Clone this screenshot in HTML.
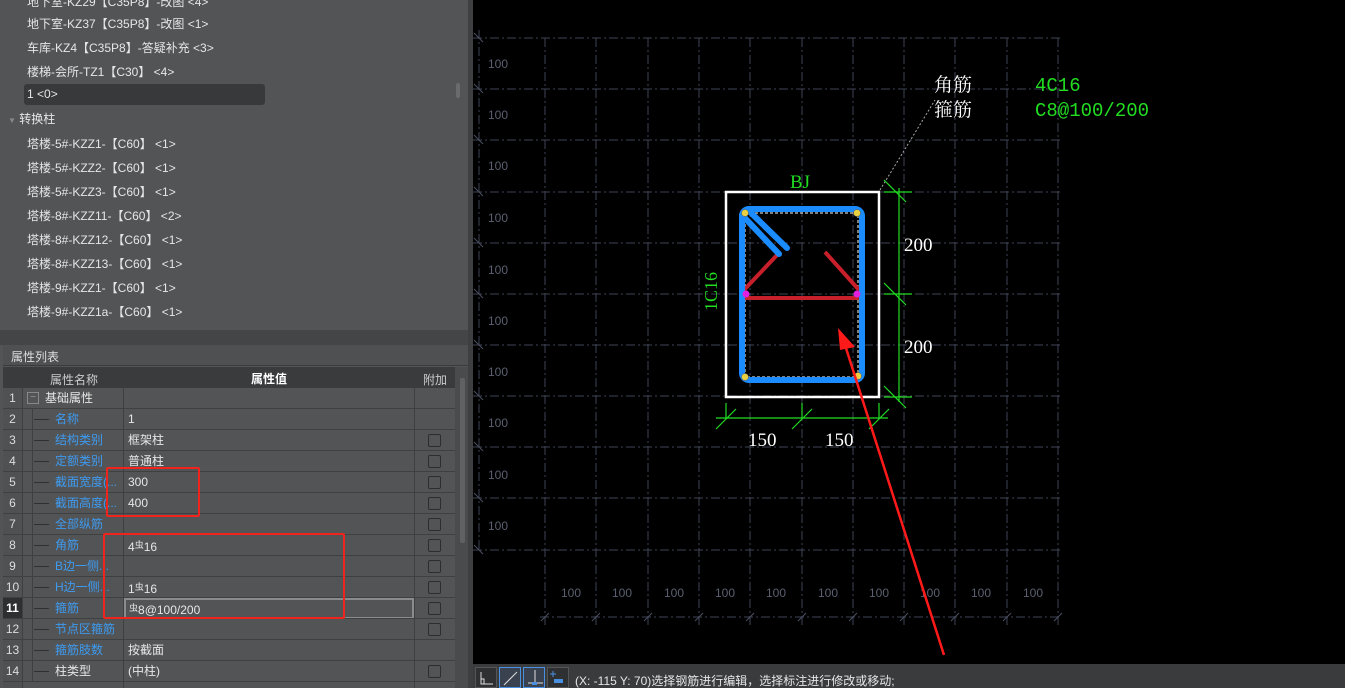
<!DOCTYPE html>
<html style="overflow:hidden;width:1345px;height:688px"><head><meta charset="utf-8"><style>
*{margin:0;padding:0;box-sizing:border-box}
body{width:1345px;height:688px;overflow:hidden;background:#000;font-family:"Liberation Sans","Noto Sans CJK SC",sans-serif;font-size:12px;position:relative}
.lp{position:absolute;left:0;top:0;width:468px;height:688px;background:#535456}
.sep{position:absolute;left:468px;top:0;width:5px;height:688px;background:#3e3f41}
.tree div{position:absolute;left:27px;color:#e6e6e6;font-size:12px;white-space:nowrap}
.t{position:absolute;color:#e6e6e6;font-size:12px;white-space:nowrap}
.row{position:absolute;left:3px;width:452px;height:21px;border-bottom:1px solid #3f4042;overflow:hidden}
.row .n{position:absolute;left:0;width:20px;top:0;height:21px;text-align:center;line-height:21px;color:#ddd;background:#505153;border-right:1px solid #3f4042}
.row .k{position:absolute;left:52px;line-height:21px;color:#3d9bf0}
.row .ln{position:absolute;left:31px;top:10px;width:15px;border-top:1px solid #2f3032}
.row .vl{position:absolute;left:29px;top:0;height:21px;border-left:1px solid #3f4042}
.row .v{position:absolute;left:125px;line-height:21px;color:#e6e6e6}
.row .c1{position:absolute;left:120px;top:0;height:21px;border-left:1px solid #3f4042}
.row .c2{position:absolute;left:411px;top:0;height:21px;border-left:1px solid #3f4042}
.row .cb{position:absolute;left:425px;top:4px;width:13px;height:13px;border:1px solid #2c2d2f;border-radius:2px}
.g{font-size:9px;vertical-align:3px}
</style></head><body>
<div class="lp"></div>
<div class="tree">
<div style="top:-7px">地下室-KZ29【C35P8】-改图 &lt;4&gt;</div>
<div style="top:15px">地下室-KZ37【C35P8】-改图 &lt;1&gt;</div>
<div style="top:39px">车库-KZ4【C35P8】-答疑补充 &lt;3&gt;</div>
<div style="top:63px">楼梯-会所-TZ1【C30】 &lt;4&gt;</div>
<div style="top:84px;left:24px;width:241px;height:21px;background:#38393b;border-radius:3px;padding:3px 0 0 3px">1 &lt;0&gt;</div>
<div style="top:110px;left:8px"><span style="color:#888;font-size:8px">▼</span> 转换柱</div>
<div style="top:135px">塔楼-5#-KZZ1-【C60】 &lt;1&gt;</div>
<div style="top:159px">塔楼-5#-KZZ2-【C60】 &lt;1&gt;</div>
<div style="top:183px">塔楼-5#-KZZ3-【C60】 &lt;1&gt;</div>
<div style="top:207px">塔楼-8#-KZZ11-【C60】 &lt;2&gt;</div>
<div style="top:231px">塔楼-8#-KZZ12-【C60】 &lt;1&gt;</div>
<div style="top:255px">塔楼-8#-KZZ13-【C60】 &lt;1&gt;</div>
<div style="top:279px">塔楼-9#-KZZ1-【C60】 &lt;1&gt;</div>
<div style="top:303px">塔楼-9#-KZZ1a-【C60】 &lt;1&gt;</div>
</div>
<div style="position:absolute;left:456px;top:83px;width:4px;height:15px;background:#6a6b6d;border-radius:2px"></div>
<div style="position:absolute;left:0;top:330px;width:468px;height:15px;background:#444547"></div>
<div style="position:absolute;left:3px;top:345px;width:465px;height:21px;background:#4f5052;border-bottom:1px solid #3a3b3d"></div>
<div class="t" style="left:11px;top:348px;color:#ddd">属性列表</div>
<div style="position:absolute;left:3px;top:367px;width:452px;height:21px;background:#3a3b3d"></div>
<div class="t" style="left:50px;top:371px;color:#ccc">属性名称</div>
<div class="t" style="left:251px;top:370px;color:#fff;font-weight:bold">属性值</div>
<div class="t" style="left:423px;top:371px;color:#ccc">附加</div>
<div style="position:absolute;left:455px;top:367px;width:13px;height:321px;background:#4a4b4d"></div>
<div style="position:absolute;left:460px;top:378px;width:5px;height:165px;background:#606163;border-radius:2px"></div>

<div class="row" style="top:388px"><div class="n">1</div><div class="c1"></div><div class="c2"></div><div style="position:absolute;left:24px;top:4px;width:12px;height:12px;border:1px solid #888;color:#999;font-size:10px;line-height:9px;text-align:center">−</div><span class="v" style="left:42px">基础属性</span></div>
<div class="row" style="top:409px"><div class="n">2</div><div class="vl"></div><div class="ln"></div><div class="c1"></div><div class="c2"></div><span class="k">名称</span><span class="v">1</span></div>
<div class="row" style="top:430px"><div class="n">3</div><div class="vl"></div><div class="ln"></div><div class="c1"></div><div class="c2"></div><span class="k">结构类别</span><span class="v">框架柱</span><div class="cb"></div></div>
<div class="row" style="top:451px"><div class="n">4</div><div class="vl"></div><div class="ln"></div><div class="c1"></div><div class="c2"></div><span class="k">定额类别</span><span class="v">普通柱</span><div class="cb"></div></div>
<div class="row" style="top:472px"><div class="n">5</div><div class="vl"></div><div class="ln"></div><div class="c1"></div><div class="c2"></div><span class="k">截面宽度(...</span><span class="v">300</span><div class="cb"></div></div>
<div class="row" style="top:493px"><div class="n">6</div><div class="vl"></div><div class="ln"></div><div class="c1"></div><div class="c2"></div><span class="k">截面高度(...</span><span class="v">400</span><div class="cb"></div></div>
<div class="row" style="top:514px"><div class="n">7</div><div class="vl"></div><div class="ln"></div><div class="c1"></div><div class="c2"></div><span class="k">全部纵筋</span><div class="cb"></div></div>
<div class="row" style="top:535px"><div class="n">8</div><div class="vl"></div><div class="ln"></div><div class="c1"></div><div class="c2"></div><span class="k">角筋</span><span class="v">4<span class="g">虫</span>16</span><div class="cb"></div></div>
<div class="row" style="top:556px"><div class="n">9</div><div class="vl"></div><div class="ln"></div><div class="c1"></div><div class="c2"></div><span class="k">B边一侧...</span><div class="cb"></div></div>
<div class="row" style="top:577px"><div class="n">10</div><div class="vl"></div><div class="ln"></div><div class="c1"></div><div class="c2"></div><span class="k">H边一侧...</span><span class="v">1<span class="g">虫</span>16</span><div class="cb"></div></div>
<div class="row" style="top:598px"><div class="n" style="color:#fff;font-weight:bold;background:#2e2f31">11</div><div class="vl"></div><div class="ln"></div><div class="c1"></div><div class="c2"></div><span class="k">箍筋</span><div style="position:absolute;left:121px;top:0;width:290px;height:21px;border:2px solid #8a8b8d"></div><span class="v" style="left:126px"><span class="g">虫</span>8@100/200</span><div class="cb"></div></div>
<div class="row" style="top:619px"><div class="n">12</div><div class="vl"></div><div class="ln"></div><div class="c1"></div><div class="c2"></div><span class="k">节点区箍筋</span><div class="cb"></div></div>
<div class="row" style="top:640px"><div class="n">13</div><div class="vl"></div><div class="ln"></div><div class="c1"></div><div class="c2"></div><span class="k">箍筋肢数</span><span class="v">按截面</span></div>
<div class="row" style="top:661px"><div class="n">14</div><div class="vl"></div><div class="ln"></div><div class="c1"></div><div class="c2"></div><span class="k" style="color:#e6e6e6">柱类型</span><span class="v">(中柱)</span><div class="cb"></div></div>
<div class="row" style="top:682px;height:6px;border:0"><div class="n" style="height:6px"></div><div class="c1"></div><div class="c2"></div></div>

<div style="position:absolute;left:106px;top:467px;width:94px;height:50px;border:2px solid #f0241c;border-radius:2px"></div>
<div style="position:absolute;left:103px;top:533px;width:242px;height:86px;border:2px solid #f0241c;border-radius:2px"></div>

<div class="sep"></div>

<svg style="position:absolute;left:0;top:0" width="1345" height="688">
<g stroke="#3f4556" stroke-width="1" stroke-dasharray="9,3,2,3" fill="none">
<path d="M473 38H1060M473 89H1060M473 140H1060M473 192H1060M473 243H1060M473 294H1060M473 345H1060M473 396H1060M473 447H1060M473 498H1060M473 550H1060"/>
<path d="M479 30V550M545 38V625M596 38V625M648 38V625M699 38V625M750 38V625M802 38V625M853 38V625M904 38V625M955 38V625M1007 38V625M1058 38V625"/>
<path d="M540 617H1062"/>
</g>
<g stroke="#4a5060" stroke-width="1">
<path d="M474 33l9 9M474 84l9 9M474 135l9 9M474 187l9 9M474 238l9 9M474 289l9 9M474 340l9 9M474 391l9 9M474 442l9 9M474 493l9 9M474 545l9 9"/>
<path d="M541 621l8-8M592 621l8-8M644 621l8-8M695 621l8-8M746 621l8-8M798 621l8-8M849 621l8-8M900 621l8-8M951 621l8-8M1003 621l8-8M1054 621l8-8"/>
</g>
<g fill="#5a6070" font-family="Liberation Sans,sans-serif" font-size="12">
<text x="488" y="68">100</text><text x="488" y="119">100</text><text x="488" y="170">100</text><text x="488" y="222">100</text><text x="488" y="274">100</text><text x="488" y="325">100</text><text x="488" y="376">100</text><text x="488" y="427">100</text><text x="488" y="479">100</text><text x="488" y="530">100</text>
<text x="561" y="597">100</text><text x="612" y="597">100</text><text x="664" y="597">100</text><text x="715" y="597">100</text><text x="766" y="597">100</text><text x="818" y="597">100</text><text x="869" y="597">100</text><text x="920" y="597">100</text><text x="971" y="597">100</text><text x="1023" y="597">100</text>
</g>
<path d="M880 190L935 100" stroke="#aaa" stroke-dasharray="2,2"/>
<g fill="#fff" font-family="Liberation Serif,'Noto Serif CJK SC',serif" font-size="19"><text x="934" y="91">角筋</text><text x="934" y="116">箍筋</text></g>
<g fill="#22dd22" font-family="Liberation Mono,monospace" font-size="19"><text x="1035" y="91">4C16</text><text x="1035" y="116">C8@100/200</text></g>
<rect x="726" y="192" width="153" height="205" fill="none" stroke="#fff" stroke-width="2.5"/>
<text x="790" y="188" fill="#22dd22" font-family="Liberation Serif,serif" font-size="19">BJ</text>
<text transform="translate(717,311) rotate(-90)" fill="#22dd22" font-family="Liberation Serif,serif" font-size="18">1C16</text>
<g stroke="#22dd22" stroke-width="1.2">
<path d="M884 192H912M884 294H912M884 397H912M899 188V402M884 180l22 22M884 283l22 22M884 386l22 22"/>
<path d="M726 403V418M802 403V418M879 403V418M716 418H888M716 429l20-20M792 429l20-20M869 429l20-20"/>
</g>
<g fill="#fff" font-family="Liberation Serif,serif" font-size="19"><text x="904" y="251">200</text><text x="904" y="353">200</text><text x="748" y="446">150</text><text x="825" y="446">150</text></g>
<path d="M745 213H858V377H745Z" fill="none" stroke="#fff" stroke-dasharray="3,2" stroke-width="1"/>
<g stroke="#c8202a" stroke-width="4" fill="none"><path d="M744 298H862M744 290L778 254M825 252L859 290"/></g>
<g stroke="#1a8cff" stroke-width="6" fill="none" stroke-linecap="round">
<rect x="742" y="209" width="120" height="171" rx="7"/>
<path d="M742 215L779 254M748 210L787 248"/>
</g>
<g fill="#e8d040" stroke="#555" stroke-width="0.5"><circle cx="745" cy="213" r="3.5"/><circle cx="857" cy="213" r="3.5"/><circle cx="745" cy="377" r="3.5"/><circle cx="858" cy="376" r="3.5"/></g>
<g fill="#e020e0"><circle cx="746" cy="294" r="3.5"/><circle cx="857" cy="294" r="3.5"/></g>
<path d="M944 655L845 345" stroke="#ff1a1a" stroke-width="2.5"/>
<path d="M838 328L855 347L840 350Z" fill="#ff1a1a"/>
</svg>

<div style="position:absolute;left:473px;top:664px;width:872px;height:24px;background:#3a3b3d"></div>
<div style="position:absolute;left:475px;top:667px;width:22px;height:21px;border:1px solid #555;background:#2f3032"></div>
<div style="position:absolute;left:499px;top:667px;width:22px;height:21px;border:1px solid #4a90e2;background:#3a4250"></div>
<div style="position:absolute;left:523px;top:667px;width:22px;height:21px;border:1px solid #4a90e2;background:#3a4250"></div>
<div style="position:absolute;left:547px;top:667px;width:22px;height:21px;border:1px solid #555;background:#2f3032"></div>
<svg style="position:absolute;left:473px;top:664px" width="100" height="24">
<path d="M8 8V20H20" stroke="#ddd" fill="none"/><path d="M8 15H11V20" stroke="#ddd" fill="none"/>
<path d="M31 21L44 8" stroke="#ddd"/>
<path d="M62 6V19M55 19H70" stroke="#ddd"/><rect x="59" y="18" width="5" height="3" fill="#4a90e2"/>
<path d="M77 10H83M80 7V13" stroke="#4a90e2"/><rect x="81" y="15" width="9" height="4" fill="#4a90e2"/>
</svg>
<div class="t" style="left:575px;top:672px;color:#e6e6e6">(X: -115 Y: 70)选择钢筋进行编辑，选择标注进行修改或移动;</div>
</body></html>
